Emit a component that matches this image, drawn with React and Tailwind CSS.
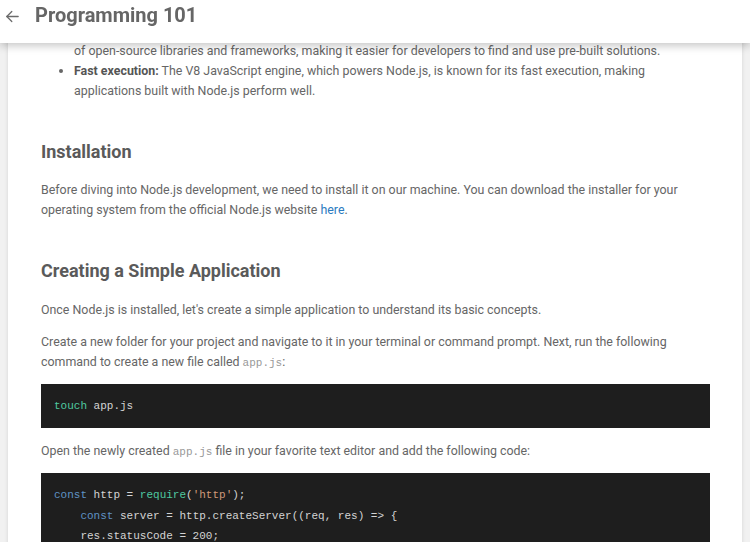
import React from "react";

const mono = { fontFamily: '"Liberation Mono", "DejaVu Sans Mono", monospace' };

export default function App() {
  return (
    <div className="min-h-[542px] bg-[#f1f1f1]" style={{ fontFamily: 'Roboto, "Liberation Sans", sans-serif' }}>
      <header className="fixed top-0 left-0 right-0 z-10 h-[43px] bg-white shadow-[0_3px_8px_rgba(0,0,0,0.22)] flex items-start pt-[3px]">
        <svg className="ml-[4px] mt-[5px]" width="17" height="17" viewBox="0 0 24 24" fill="none" stroke="#6b6b6b" strokeWidth="1.8" strokeLinecap="round" strokeLinejoin="round">
          <path d="M20 12H4" />
          <path d="M11 19l-7-7 7-7" />
        </svg>
        <h1 className="ml-[14px] text-[20px] leading-[24px] font-bold text-[#666]">Programming 101</h1>
      </header>

      <main className="mx-2 bg-white shadow-[0_0_4px_rgba(0,0,0,0.12)] pt-[41px] pb-10 pl-[33px] pr-[32px] text-[12.4px] leading-[20px] text-[#666]">
        <ul className="pl-[33px]">
          <li className="list-none">of open-source libraries and frameworks, making it easier for developers to find and use pre-built solutions.</li>
          <li className="list-disc">
            <b className="font-bold text-[#555]">Fast execution:</b> The V8 JavaScript engine, which powers Node.js, is known for its fast execution, making applications built with Node.js perform well.
          </li>
        </ul>

        <h2 className="mt-[39px] mb-4 text-[18px] leading-[24px] font-bold text-[#5a5a5a]">Installation</h2>
        <p>
          Before diving into Node.js development, we need to install it on our machine. You can download the installer for your operating system from the official Node.js website <a className="text-[#2b7bbf]">here</a>.
        </p>

        <h2 className="mt-[39px] mb-[17px] text-[18px] leading-[24px] font-bold text-[#5a5a5a]">Creating a Simple Application</h2>
        <p>Once Node.js is installed, let's create a simple application to understand its basic concepts.</p>
        <p className="mt-3">
          Create a new folder for your project and navigate to it in your terminal or command prompt. Next, run the following command to create a new file called <code className="text-[11px] leading-[14px] text-[#999]" style={mono}>app.js</code>:
        </p>

        <pre className="mt-3 bg-[#1e1e1e] px-[13px] py-3 text-[11px] leading-[20px] text-[#d4d4d4]" style={mono}>
          <span className="text-[#4ec9a0]">touch</span> app.js
        </pre>

        <p className="mt-[13px]">
          Open the newly created <code className="text-[11px] leading-[14px] text-[#999]" style={mono}>app.js</code> file in your favorite text editor and add the following code:
        </p>

        <pre className="mt-3 bg-[#1e1e1e] px-[13px] pt-3 pb-3 text-[11px] leading-[20.5px] text-[#d4d4d4] whitespace-pre" style={mono}>
<span className="text-[#5f92c4]">const</span>{" http = "}<span className="text-[#4ec9a0]">require</span>{"("}<span className="text-[#d09a7a]">'http'</span>{");\n"}
{"    "}<span className="text-[#5f92c4]">const</span>{" server = http.createServer((req, res) => {\n"}
{"    res.statusCode = 200;"}
        </pre>
      </main>
    </div>
  );
}
